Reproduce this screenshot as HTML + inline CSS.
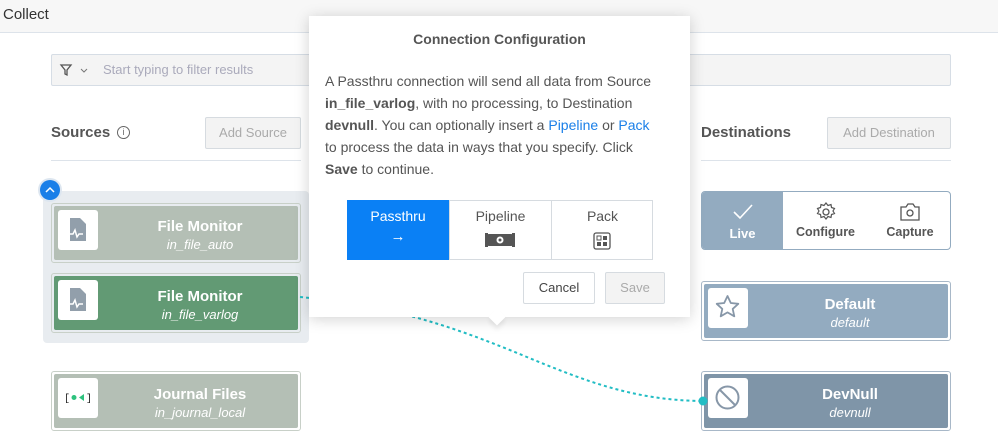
<!DOCTYPE html>
<html><head><style>
*{box-sizing:border-box;margin:0;padding:0}
body{width:998px;height:445px;overflow:hidden;background:#fff;font-family:"Liberation Sans",sans-serif;position:relative;color:#444}
.a{position:absolute}
.card{position:absolute;border:1px solid #c8d0c8;border-radius:3px;padding:2px}
.ci{width:100%;height:100%;border-radius:2px;position:relative;color:#fff;text-align:center}
.ico{position:absolute;left:4px;top:4px;width:40px;height:40px;background:#fff;border-radius:3px}
.t1{position:absolute;left:48px;right:0;top:12px;font-size:15px;font-weight:bold}
.t2{position:absolute;left:48px;right:0;top:31px;font-size:13px;font-style:italic}
.btn{position:absolute;border:1px solid #d6dbe0;background:#f3f3f3;color:#aaa;font-size:13px;text-align:center;border-radius:2px}
</style></head><body>
<div class="a" style="left:0;top:0;width:998px;height:33px;background:#f7f7f7;border-bottom:1px solid #dde3ea"></div>
<div class="a" style="left:3px;top:6px;font-size:15px;color:#333">Collect</div>
<div class="a" style="left:51px;top:54px;width:900px;height:32px;background:#f4f4f4;border:1px solid #d6dde5;border-radius:2px"></div>
<svg class="a" style="left:59px;top:62px" width="30" height="16"><path d="M2 3h10l-4 5v5l-2-1v-4z" fill="none" stroke="#555" stroke-width="1.3"/><path d="M22 7l3 3 3-3" fill="none" stroke="#777" stroke-width="1"/></svg>
<div class="a" style="left:103px;top:62px;font-size:13px;color:#aab">Start typing to filter results</div>
<div class="a" style="left:51px;top:124px;font-size:15px;font-weight:bold;color:#555">Sources</div>
<div class="a" style="left:117px;top:126px;width:13px;height:13px;border:1px solid #666;border-radius:50%;font-size:9px;text-align:center;line-height:11px;color:#666">i</div>
<div class="btn" style="left:205px;top:117px;width:96px;height:32px;line-height:30px">Add Source</div>
<div class="a" style="left:51px;top:160px;width:250px;height:1px;background:#dde3ea"></div>
<div class="a" style="left:701px;top:124px;font-size:15px;font-weight:bold;color:#555">Destinations</div>
<div class="btn" style="left:827px;top:117px;width:124px;height:32px;line-height:30px">Add Destination</div>
<div class="a" style="left:701px;top:160px;width:250px;height:1px;background:#dde3ea"></div>

<div class="a" style="left:43px;top:191px;width:266px;height:152px;background:#e8ecf0;border-radius:4px"></div>
<div class="a" style="left:38px;top:178px;width:24px;height:24px;border-radius:50%;background:#dde6f0"></div>
<div class="a" style="left:40px;top:180px;width:20px;height:20px;border-radius:50%;background:#1a7fe8"></div>
<svg class="a" style="left:40px;top:180px" width="20" height="20"><path d="M6 12l4-4 4 4" fill="none" stroke="#fff" stroke-width="1.5"/></svg>

<div class="card" style="left:51px;top:203px;width:250px;height:60px"><div class="ci" style="background:#b4bfb5"><div class="ico"><svg width="40" height="40"><path d="M12 8h10l6 6v17h-16z" fill="#929fab"/><path d="M9 24h6l2-4 2 7 2-3h4" fill="none" stroke="#fff" stroke-width="1.5"/></svg></div><div class="t1">File Monitor</div><div class="t2">in_file_auto</div></div></div>
<div class="card" style="left:51px;top:273px;width:250px;height:60px"><div class="ci" style="background:#629a74"><div class="ico"><svg width="40" height="40"><path d="M12 8h10l6 6v17h-16z" fill="#929fab"/><path d="M9 24h6l2-4 2 7 2-3h4" fill="none" stroke="#fff" stroke-width="1.5"/></svg></div><div class="t1">File Monitor</div><div class="t2">in_file_varlog</div></div></div>
<div class="card" style="left:51px;top:371px;width:250px;height:60px"><div class="ci" style="background:#b4bfb5"><div class="ico"><svg width="40" height="40"><text x="6" y="23" font-size="10" font-family="Liberation Mono" fill="#222">[</text><circle cx="16" cy="19.5" r="2.5" fill="#2ec27e"/><path d="M26 16v7l-5-3.5z" fill="#2ec27e"/><text x="28" y="23" font-size="10" font-family="Liberation Mono" fill="#222">]</text></svg></div><div class="t1">Journal Files</div><div class="t2">in_journal_local</div></div></div>

<div class="a" style="left:701px;top:191px;width:250px;height:59px;border:1px solid #93abc0;border-radius:4px;background:#fff;overflow:hidden">
<div class="a" style="left:0;top:0;width:81px;height:57px;background:#93abc0;color:#fff;text-align:center"><svg width="24" height="22" style="margin-top:9px"><path d="M3 11l6 6 12-13" fill="none" stroke="#fff" stroke-width="1.6"/></svg><div style="font-size:13px;font-weight:bold;margin-top:-2px">Live</div></div>
<div class="a" style="left:81px;top:0;width:85px;height:57px;text-align:center;color:#555"><svg width="22" height="22" style="margin-top:9px"><circle cx="11" cy="11" r="3" fill="none" stroke="#555" stroke-width="1.3"/><path d="M11 2l2 2.5 3-1 .5 3 3 1-1.5 2.5 1.5 2.5-3 1-.5 3-3-1-2 2.5-2-2.5-3 1-.5-3-3-1 1.5-2.5-1.5-2.5 3-1 .5-3 3 1z" fill="none" stroke="#555" stroke-width="1.2"/></svg><div style="font-size:12.5px;font-weight:bold;margin-top:-3px">Configure</div></div>
<div class="a" style="left:166px;top:0;width:84px;height:57px;text-align:center;color:#555"><svg width="22" height="22" style="margin-top:9px"><path d="M2 6h5l2-3h5l2 3h4v13h-18z" fill="none" stroke="#555" stroke-width="1.3"/><circle cx="11" cy="12" r="3" fill="none" stroke="#555" stroke-width="1.3"/></svg><div style="font-size:12.5px;font-weight:bold;margin-top:-3px">Capture</div></div>
</div>
<div class="card" style="left:701px;top:281px;width:250px;height:60px;border-color:#a8b8c8"><div class="ci" style="background:#93abc0"><div class="ico"><svg width="40" height="40"><path d="M19.5 8l3.3 7 7.5.8-5.6 5.1 1.6 7.4-6.8-3.9-6.8 3.9 1.6-7.4-5.6-5.1 7.5-.8z" fill="none" stroke="#8797a8" stroke-width="1.8" stroke-linejoin="round"/></svg></div><div class="t1">Default</div><div class="t2">default</div></div></div>
<div class="card" style="left:701px;top:371px;width:250px;height:60px;border-color:#a8b8c8"><div class="ci" style="background:#7f95a8"><div class="ico"><svg width="40" height="40"><circle cx="19.5" cy="19.5" r="11" fill="none" stroke="#8797a8" stroke-width="2"/><path d="M12 12l15 15" stroke="#8797a8" stroke-width="2"/></svg></div><div class="t1">DevNull</div><div class="t2">devnull</div></div></div>

<svg class="a" style="left:0;top:0" width="998" height="445"><path d="M300 297 C 500 315 560 400 703 401" fill="none" stroke="#22bdc4" stroke-width="2" stroke-dasharray="3 3"/><circle cx="703" cy="401" r="4.5" fill="#22bdc4"/></svg>

<div class="a" style="left:309px;top:16px;width:381px;height:301px;background:#fff;box-shadow:0 2px 14px rgba(0,0,0,.18)"></div>
<div class="a" style="left:491px;top:311px;width:12px;height:12px;background:#fff;transform:rotate(45deg);box-shadow:3px 3px 5px rgba(0,0,0,.08)"></div>
<div class="a" style="left:309px;top:31px;width:381px;text-align:center;font-size:14px;font-weight:bold;color:#555">Connection Configuration</div>
<div class="a" style="left:325px;top:70px;width:360px;font-size:14px;line-height:22px;color:#555">A Passthru connection will send all data from Source<br><b>in_file_varlog</b>, with no processing, to Destination<br><b>devnull</b>. You can optionally insert a <span style="color:#1a7fe8">Pipeline</span> or <span style="color:#1a7fe8">Pack</span><br>to process the data in ways that you specify. Click<br><b>Save</b> to continue.</div>
<div class="a" style="left:347px;top:200px;width:306px;height:60px;border:1px solid #d6dbe0"></div>
<div class="a" style="left:347px;top:200px;width:102px;height:60px;background:#0a80f5;color:#fff;text-align:center;font-size:14px;padding-top:8px">Passthru<div style="font-size:15px;margin-top:4px">→</div></div>
<div class="a" style="left:449px;top:200px;width:1px;height:60px;background:#d6dbe0"></div>
<div class="a" style="left:551px;top:200px;width:1px;height:60px;background:#d6dbe0"></div>
<div class="a" style="left:450px;top:208px;width:101px;text-align:center;font-size:14px;color:#555">Pipeline</div>
<svg class="a" style="left:485px;top:231px" width="30" height="18"><rect x="2" y="3" width="26" height="12" rx="2" fill="#555"/><rect x="0" y="2" width="3" height="14" fill="#555"/><rect x="27" y="2" width="3" height="14" fill="#555"/><circle cx="15" cy="9" r="3.5" fill="#fff"/><circle cx="15" cy="9" r="1.5" fill="#555"/></svg>
<div class="a" style="left:552px;top:208px;width:101px;text-align:center;font-size:14px;color:#555">Pack</div>
<svg class="a" style="left:593px;top:232px" width="18" height="18"><rect x="1" y="1" width="16" height="16" rx="2" fill="none" stroke="#555" stroke-width="1.3"/><rect x="4" y="4" width="4" height="4" fill="none" stroke="#555"/><rect x="10" y="4" width="4" height="4" fill="#555"/><rect x="4" y="10" width="4" height="4" fill="#555"/><rect x="10" y="10" width="4" height="4" fill="#555"/></svg>
<div class="a" style="left:523px;top:272px;width:72px;height:32px;border:1px solid #d6dbe0;border-radius:2px;text-align:center;line-height:30px;font-size:13px;color:#444">Cancel</div>
<div class="btn" style="left:605px;top:272px;width:60px;height:32px;line-height:30px">Save</div>
</body></html>
